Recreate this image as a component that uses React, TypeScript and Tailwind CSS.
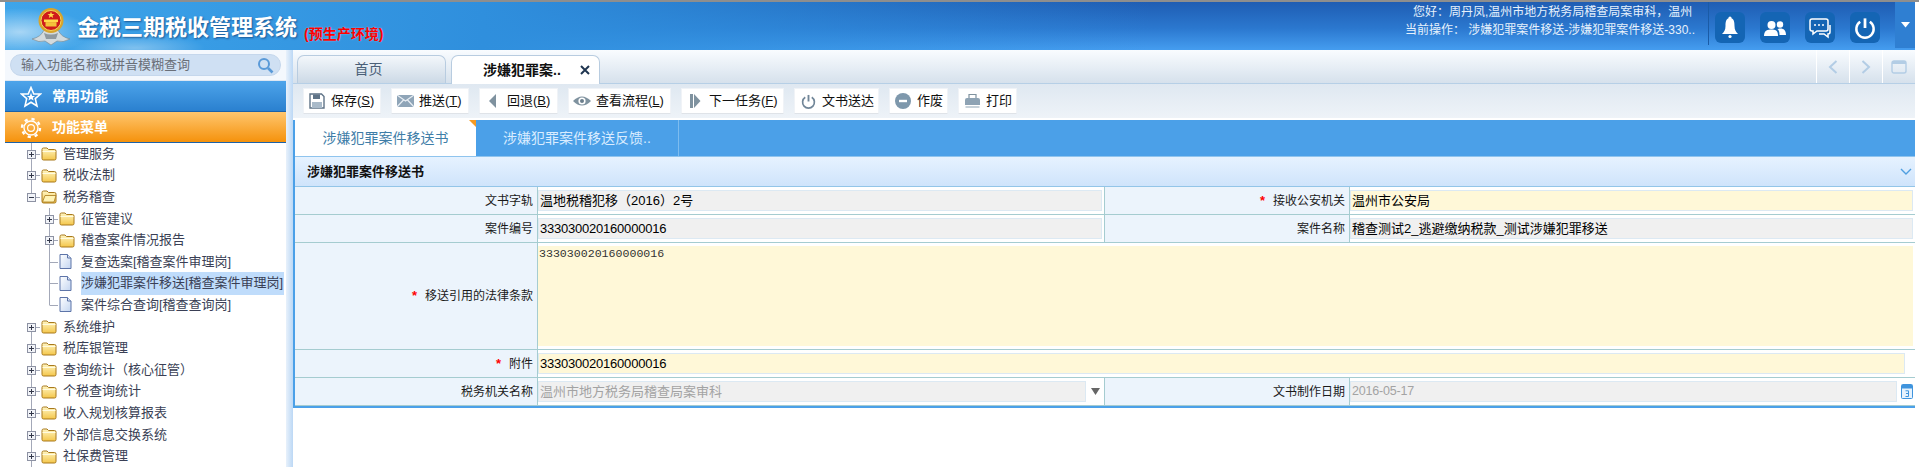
import React from "react";

const Folder = ({ open }: { open?: boolean }) => (
  <svg width="16" height="15" viewBox="0 0 16 15" className="shrink-0">
    <defs>
      <linearGradient id="fg" x1="0" y1="0" x2="0" y2="1">
        <stop offset="0" stopColor="#fff6c4" />
        <stop offset="1" stopColor="#f4c64a" />
      </linearGradient>
    </defs>
    <path d="M1 3.5 Q1 2 2.5 2 H6 L7.5 3.5 H13.5 Q15 3.5 15 5 V12.5 Q15 14 13.5 14 H2.5 Q1 14 1 12.5 Z" fill="url(#fg)" stroke="#a8791c" strokeWidth="1" />
    {open ? <path d="M1.5 13 L4 6.5 H15 L13 13 Z" fill="#fff3b5" stroke="#a8791c" strokeWidth="0.8" /> : <path d="M1.5 5.5 H14.5" stroke="#fffbe0" strokeWidth="1" />}
  </svg>
);

const Doc = () => (
  <svg width="13" height="15" viewBox="0 0 13 15" className="shrink-0">
    <defs>
      <linearGradient id="dg" x1="0" y1="0" x2="1" y2="1">
        <stop offset="0" stopColor="#ffffff" />
        <stop offset="1" stopColor="#c3d5f0" />
      </linearGradient>
    </defs>
    <path d="M1 .5 H8.5 L12 4 V14.5 H1 Z" fill="url(#dg)" stroke="#5d74a8" />
    <path d="M8.5 .5 V4 H12" fill="#dfe8f6" stroke="#5d74a8" />
  </svg>
);

type Conn = "plus" | "minus" | "tee" | "elbow";

const Connector = ({ kind, above = true, below = true }: { kind: Conn; above?: boolean; below?: boolean }) => (
  <svg width="18" height="22" viewBox="0 0 18 22" className="shrink-0">
    {above && <path d="M9.5 0 V11" stroke="#a3a8b8" />}
    {below && kind !== "elbow" && <path d="M9.5 11 V22" stroke="#a3a8b8" />}
    {(kind === "tee" || kind === "elbow") && <path d="M9.5 11.5 H18" stroke="#a3a8b8" />}
    {(kind === "plus" || kind === "minus") && (
      <g>
        <path d="M14 11.5 H18" stroke="#a3a8b8" />
        <rect x="5.5" y="7.5" width="8" height="8" fill="#f1f3f8" stroke="#8d92a3" />
        <path d="M7 11.5 H12" stroke="#33384a" />
        {kind === "plus" && <path d="M9.5 9 V14" stroke="#33384a" />}
      </g>
    )}
  </svg>
);

const Row = ({ level = 1, kind, icon, label, selected, above, below }: { level?: number; kind: Conn; icon: "folder" | "open" | "doc"; label: string; selected?: boolean; above?: boolean; below?: boolean }) => (
  <div className={`flex items-center h-[21.6px] ${level === 2 ? "pl-[35px]" : "pl-[17px]"}`}>
    <Connector kind={kind} above={above} below={below} />
    <div className="w-[23px] shrink-0 pl-[1px]">
      {icon === "doc" ? <Doc /> : <Folder open={icon === "open"} />}
    </div>
    <span className={`text-[13px] leading-[22px] whitespace-nowrap text-[#3a3f55] ${selected ? "bg-[#bfdcfb] w-[203px] h-[23px]" : ""}`}>{label}</span>
  </div>
);

const ToolBtn = ({ icon, label, u, w }: { icon: React.ReactNode; label: string; u?: string; w: string }) => (
  <div className={`${w} h-[26px] flex items-center gap-[5px] pl-[4px] bg-white border border-[#f0f3f7] border-b-[#dfe3e8] text-[13px] text-[#111] whitespace-nowrap`}>
    <span className="w-[18px] flex justify-center shrink-0">{icon}</span>
    <span>
      {label}
      {u && (
        <>
          (<span className="underline">{u}</span>)
        </>
      )}
    </span>
  </div>
);

const Label = ({ children, req }: { children: React.ReactNode; req?: boolean }) => (
  <div className="bg-[#ecf4fc] flex items-center justify-end pr-[4px] text-[12px] text-[#1a1a1a] whitespace-nowrap">
    {req && <span className="text-[#f00] font-bold mr-[8px] text-[13px]">*</span>}
    {children}
  </div>
);

const Input = ({ children, tone = "gray" }: { children?: React.ReactNode; tone?: "gray" | "yellow" }) => (
  <div className={`h-[21px] flex-1 flex items-center pl-[1px] border border-[#dce9f3] text-[13px] whitespace-nowrap ${tone === "gray" ? "bg-[#f0f0f0]" : "bg-[#fff8d8]"}`}>
    {children}
  </div>
);

const Value = ({ children, extra = "pr-[2px]" }: { children: React.ReactNode; extra?: string }) => <div className={`bg-white flex items-center ${extra}`}>{children}</div>;

const Emblem = () => (
  <svg width="38" height="38" viewBox="0 0 38 38" className="shrink-0">
    <path d="M0 31 Q9 29 12 22 L26 22 Q29 29 38 31 Q31 35 25 33 L19 37 L13 33 Q7 35 0 31 Z" fill="#d3dadd" stroke="#75858c" strokeWidth=".6" />
    <circle cx="19" cy="12.5" r="12.5" fill="#d8a42c" />
    <circle cx="19" cy="12.5" r="10" fill="#cf1b1b" stroke="#f6d65a" />
    <path d="M19 3.5 l.9 2.4 h2.6 l-2 1.6 .7 2.5 -2.2-1.5 -2.2 1.5 .7-2.5 -2-1.6 h2.6 z" fill="#ffd94a" />
    <rect x="12" y="11.5" width="14" height="2.6" fill="#ffd94a" />
    <rect x="13.5" y="14.1" width="11" height="4.4" fill="#f4c23a" />
    <path d="M12 25 Q19 28 26 25 L24 31 H14 Z" fill="#8f99a0" />
  </svg>
);

const HeadIcon = ({ children }: { children: React.ReactNode }) => <div className="w-[30px] h-[31px] rounded-[6px] bg-[#1465b4] flex items-center justify-center">{children}</div>;

const Save = () => (
  <svg width="16" height="16" viewBox="0 0 16 16"><path d="M1 1 H12.5 L15 3.5 V15 H1 Z" fill="#fff" stroke="#5f7387" strokeWidth="1.4" /><rect x="4" y="1.5" width="7" height="4.5" fill="#5f7387" /><rect x="3" y="9" width="10" height="6" fill="#a9bac9" /></svg>
);
const Mail = () => (
  <svg width="17" height="12" viewBox="0 0 17 12"><rect width="17" height="12" fill="#8fa5b8" /><path d="M0 0 L8.5 6 L17 0 M0 12 L6.5 5 M17 12 L10.5 5" stroke="#e8eef4" strokeWidth="1.2" fill="none" /></svg>
);
const Back = () => (
  <svg width="10" height="14" viewBox="0 0 10 14"><path d="M8 0 V14 L1 7 Z" fill="#7f929f" /></svg>
);
const Eye = () => (
  <svg width="18" height="12" viewBox="0 0 18 12"><path d="M0 6 Q9 -3 18 6 Q9 15 0 6 Z" fill="#7f929f" /><circle cx="9" cy="6" r="3.6" fill="#fff" /><circle cx="9" cy="6" r="2" fill="#6b7e8c" /></svg>
);
const Next = () => (
  <svg width="11" height="14" viewBox="0 0 11 14"><path d="M0 0 H3 V14 H0 Z M4 0 L10.5 7 L4 14 Z" fill="#7f929f" /></svg>
);
const Power = ({ c = "#718698", s = 15 }: { c?: string; s?: number }) => (
  <svg width={s} height={s} viewBox="0 0 16 16" fill="none"><path d="M8 1 V8" stroke={c} strokeWidth="2" /><path d="M4.5 3.5 A6.3 6.3 0 1 0 11.5 3.5" stroke={c} strokeWidth="1.8" /></svg>
);
const Abolish = () => (
  <svg width="16" height="16" viewBox="0 0 16 16"><circle cx="8" cy="8" r="8" fill="#7e98ac" /><rect x="4" y="6.8" width="8" height="2.4" fill="#fff" /></svg>
);
const Printer = () => (
  <svg width="17" height="16" viewBox="0 0 17 16"><path d="M5 5 V1.5 H12 V5" fill="none" stroke="#7f929f" strokeWidth="1.2" /><path d="M1 12 V7 Q1 5 3 5 H14 Q16 5 16 7 V12 Z" fill="#8ea3b4" /><rect x="1.5" y="13.5" width="14" height="1" fill="#8ea3b4" /></svg>
);

export default function App() {
  return (
    <div className="w-[1919px] h-[467px] overflow-hidden flex flex-col bg-white border-t-2 border-t-[#8e8e8e] font-['Liberation_Sans','Noto_Sans_CJK_SC',sans-serif]">
      <header className="h-[48px] shrink-0 flex items-stretch ml-[5px] mr-[4px] bg-[radial-gradient(ellipse_70px_24px_at_15px_30px,rgba(255,255,255,.55),transparent),radial-gradient(ellipse_70px_14px_at_130px_46px,rgba(255,255,255,.35),transparent),linear-gradient(90deg,#3ea5ea_0%,#2f8fdd_25%,rgba(40,120,210,0)_60%),linear-gradient(180deg,#1f5db3_0%,#2b78cf_55%,#459df0_100%)]">
        <div className="flex items-start pl-[27px] pt-[6px]">
          <Emblem />
          <span className="ml-[7px] mt-[3px] text-[22px] leading-[34px] font-bold text-white whitespace-nowrap [text-shadow:1px_1px_2px_rgba(0,30,80,.55)]">金税三期税收管理系统</span>
          <span className="ml-[7px] mt-[14px] text-[14px] leading-[24px] font-bold text-[#f00] whitespace-nowrap [text-shadow:0_0_2px_rgba(255,255,255,.45)]">(预生产环境)</span>
        </div>
        <div className="ml-auto flex items-stretch">
          <div className="w-[293px] pt-[1px] text-[12px] leading-[18px] text-[#e6f1fc] whitespace-nowrap">
            <div className="pl-[8px]">您好：周丹凤,温州市地方税务局稽查局案审科，温州</div>
            <div>当前操作： 涉嫌犯罪案件移送-涉嫌犯罪案件移送-330..</div>
          </div>
          <div className="w-[1px] h-[43px] bg-[#1a5ba6] ml-[10px]" />
          <div className="flex gap-[15px] pl-[6px] pt-[10px] items-start">
            <HeadIcon>
              <svg width="18" height="23" viewBox="0 0 18 23"><circle cx="9" cy="2" r="1.6" fill="#fff" /><path d="M9 2 C5 2 4.5 6 4.5 10 C4.5 14 3 16 1 18 H17 C15 16 13.5 14 13.5 10 C13.5 6 13 2 9 2 Z" fill="#fff" /><circle cx="9" cy="20.5" r="1.6" fill="#fff" /></svg>
            </HeadIcon>
            <HeadIcon>
              <svg width="22" height="16" viewBox="0 0 22 16"><circle cx="7.5" cy="5" r="4" fill="#fff" /><path d="M0 16 C0 10 4 9.5 7.5 9.5 C11 9.5 14 10 14 16 Z" fill="#fff" /><circle cx="16" cy="4.5" r="3.2" fill="#fff" /><path d="M15.5 15 C15.5 11 14.5 10 13.5 9 C18 7.5 22 9 22 15 Z" fill="#fff" /></svg>
            </HeadIcon>
            <HeadIcon>
              <svg width="22" height="22" viewBox="0 0 22 22" fill="none"><path d="M3 2 H17 Q19 2 19 4 V12 Q19 14 17 14 H8 L4 17 V14 H3 Q1 14 1 12 V4 Q1 2 3 2 Z" stroke="#fff" strokeWidth="1.5" /><circle cx="6" cy="8" r="1" fill="#fff" /><circle cx="10" cy="8" r="1" fill="#fff" /><circle cx="14" cy="8" r="1" fill="#fff" /><path d="M21 8 V15 Q21 17 19 17 V20 L15 17 H10" stroke="#fff" strokeWidth="1.5" /></svg>
            </HeadIcon>
            <HeadIcon>
              <Power c="#fff" s={22} />
            </HeadIcon>
          </div>
          <div className="w-[20px] h-[46px] ml-[15px] bg-[#2f7fd2] flex items-center justify-center">
            <svg width="9" height="6" viewBox="0 0 9 6"><path d="M0 0 H9 L4.5 5.5 Z" fill="#fff" /></svg>
          </div>
        </div>
      </header>

      <div className="flex-1 min-h-0 flex ml-[5px] mr-[4px]">
        <aside className="w-[281px] shrink-0 flex flex-col bg-white">
          <div className="h-[31px] shrink-0 flex items-center px-[5px] bg-[#f4f8fd] border-b border-b-[#dde7f2]">
            <div className="flex-1 h-[22px] rounded-full bg-[#cfe0f3] border border-[#c5d7ec] flex items-center pl-[10px] pr-[6px] text-[13px] text-[#6a6f78] whitespace-nowrap">
              <span>输入功能名称或拼音模糊查询</span>
              <svg className="ml-auto" width="17" height="17" viewBox="0 0 17 17" fill="none"><circle cx="7" cy="7" r="5" stroke="#5a9ad8" strokeWidth="2" /><path d="M11 11 L15.5 15.5" stroke="#5a9ad8" strokeWidth="2.6" /></svg>
            </div>
          </div>
          <div className="h-[31px] shrink-0 flex items-center pl-[15px] pt-[1px] gap-[10px] text-white font-bold text-[14px] bg-[linear-gradient(180deg,#4da4ea,#2a80cf)] border-b border-b-[#1c62a8]">
            <svg width="22" height="22" viewBox="0 0 22 22"><path d="M11 1.5 L13.8 8 H20.5 L15.3 12.6 L17 20 L11 16.3 L5 20 L6.7 12.6 L1.5 8 H8.2 Z" fill="none" stroke="#fff" strokeWidth="1.6" /><path d="M11 7 L12.2 10 H15 L12.8 11.8 L13.6 14.6 L11 13 L8.4 14.6 L9.2 11.8 L7 10 H9.8 Z" fill="#fff" /></svg>
            <span>常用功能</span>
          </div>
          <div className="h-[31px] shrink-0 flex items-center pl-[15px] pt-[1px] gap-[10px] text-white font-bold text-[14px] bg-[linear-gradient(180deg,#ffc66e,#f5920c)] border-b border-b-[#1c62a8]">
            <svg width="22" height="22" viewBox="0 0 22 22" fill="none"><circle cx="11" cy="11" r="7" stroke="#fff" strokeWidth="1.4" /><circle cx="11" cy="11" r="9" stroke="#fff" strokeWidth="2.4" strokeDasharray="3.2 3.9" /><circle cx="11" cy="11" r="3.4" stroke="#fff" strokeWidth="1.2" /></svg>
            <span>功能菜单</span>
          </div>
          <div className="flex-1 min-h-0 overflow-hidden">
            <Row kind="plus" icon="folder" label="管理服务" />
            <Row kind="plus" icon="folder" label="税收法制" />
            <Row kind="minus" icon="open" label="税务稽查" below={false} />
            <Row level={2} kind="plus" icon="folder" label="征管建议" />
            <Row level={2} kind="plus" icon="folder" label="稽查案件情况报告" />
            <Row level={2} kind="tee" icon="doc" label="复查选案[稽查案件审理岗]" />
            <Row level={2} kind="tee" icon="doc" label="涉嫌犯罪案件移送[稽查案件审理岗]" selected />
            <Row level={2} kind="elbow" icon="doc" label="案件综合查询[稽查查询岗]" />
            <Row kind="plus" icon="folder" label="系统维护" above={false} />
            <Row kind="plus" icon="folder" label="税库银管理" />
            <Row kind="plus" icon="folder" label="查询统计（核心征管）" />
            <Row kind="plus" icon="folder" label="个税查询统计" />
            <Row kind="plus" icon="folder" label="收入规划核算报表" />
            <Row kind="plus" icon="folder" label="外部信息交换系统" />
            <Row kind="plus" icon="folder" label="社保费管理" />
          </div>
        </aside>
        <div className="w-[7px] shrink-0 bg-[linear-gradient(90deg,#e8f1fb,#bcd8f5)]" />

        <main className="flex-1 min-w-0 flex flex-col">
          <div className="h-[34px] shrink-0 flex items-end pl-[4px] gap-[5px] bg-[linear-gradient(180deg,#f9fcff,#d6e1ec)] border-b border-b-[#b6cfe6]">
            <div className="w-[149px] h-[28px] rounded-t-[7px] border border-b-0 border-[#b8cce0] bg-[linear-gradient(180deg,#f3f7fb,#ccd9e6)] flex items-center justify-center pr-[6px] text-[14px] text-[#4a6078]">首页</div>
            <div className="w-[149px] h-[29px] -mb-[1px] rounded-t-[7px] border border-b-0 border-[#b8cce0] bg-white flex items-center pl-[31px] gap-[19px] text-[14px] font-bold text-[#111] whitespace-nowrap">
              <span>涉嫌犯罪案..</span>
              <svg width="10" height="10" viewBox="0 0 10 10"><path d="M1 1 L9 9 M9 1 L1 9" stroke="#1f3550" strokeWidth="2" /></svg>
            </div>
            <div className="ml-auto flex h-full">
              {[
                <svg key="a" width="10" height="14" viewBox="0 0 10 14" fill="none"><path d="M8.5 1 L2 7 L8.5 13" stroke="#b3cde5" strokeWidth="2" /></svg>,
                <svg key="b" width="10" height="14" viewBox="0 0 10 14" fill="none"><path d="M1.5 1 L8 7 L1.5 13" stroke="#b3cde5" strokeWidth="2" /></svg>,
                <svg key="c" width="16" height="14" viewBox="0 0 16 14" fill="none"><rect x="1" y="1" width="14" height="12" rx="2" stroke="#b3cde5" strokeWidth="1.4" /><rect x="1" y="1" width="14" height="3" fill="#b3cde5" /></svg>,
              ].map((ic, i) => (
                <div key={i} className="w-[33px] flex items-center justify-center border-l border-l-white">{ic}</div>
              ))}
            </div>
          </div>

          <div className="h-[36px] shrink-0 flex items-start pt-[4px] pl-[10px] gap-[10px] bg-[linear-gradient(180deg,#dfe8f1,#eef3f8)] border-b-2 border-b-white">
            <ToolBtn w="w-[78px]" icon={<Save />} label="保存" u="S" />
            <ToolBtn w="w-[78px]" icon={<Mail />} label="推送" u="T" />
            <ToolBtn w="w-[79px]" icon={<Back />} label="回退" u="B" />
            <ToolBtn w="w-[103px]" icon={<Eye />} label="查看流程" u="L" />
            <ToolBtn w="w-[103px]" icon={<Next />} label="下一任务" u="F" />
            <ToolBtn w="w-[85px]" icon={<Power />} label="文书送达" />
            <ToolBtn w="w-[59px]" icon={<Abolish />} label="作废" />
            <ToolBtn w="w-[59px]" icon={<Printer />} label="打印" />
          </div>

          <section className="shrink-0 border-l-2 border-l-[#4ba0e8] border-b-2 border-b-[#4ba0e8]">
            <div className="h-[37px] flex bg-[#4ba0e8] border-b border-b-[#8fc4ee] text-[14px] whitespace-nowrap">
              <div className="relative w-[181px] bg-white flex items-center justify-center text-[#3f7ea8]">
                涉嫌犯罪案件移送书
                <span className="absolute top-0 right-0 w-0 h-0 border-t-[7px] border-t-[#f59a23] border-l-[7px] border-l-transparent" />
              </div>
              <div className="w-[203px] flex items-center justify-center text-[#d9ecff] border-r border-r-[#7dbcef]">涉嫌犯罪案件移送反馈..</div>
            </div>
            <div className="h-[30px] flex items-center justify-between pl-[12px] pr-[3px] bg-[linear-gradient(180deg,#e6f2ff,#cfe4fb)] border-b border-b-[#93c5e8] text-[13px] font-bold text-[#111]">
              <span>涉嫌犯罪案件移送书</span>
              <svg width="12" height="7" viewBox="0 0 12 7" fill="none"><path d="M1 1 L6 6 L11 1" stroke="#4f9fe0" strokeWidth="1.4" /></svg>
            </div>
            <div className="grid grid-cols-[242px_566px_244px_1fr] grid-rows-[27px_27px_106px_27px_27px] gap-[1px] bg-[#a5ccd0] border-b border-b-[#a5ccd0]">
              <Label>文书字轨</Label>
              <Value><Input><span>温地税稽犯移（2016）2号</span></Input></Value>
              <Label req>接收公安机关</Label>
              <Value><Input tone="yellow"><span>温州市公安局</span></Input></Value>

              <Label>案件编号</Label>
              <Value><Input><span className="tracking-[-0.22px]">333030020160000016</span></Input></Value>
              <Label>案件名称</Label>
              <Value><Input><span>稽查测试2_逃避缴纳税款_测试涉嫌犯罪移送</span></Input></Value>

              <Label req>移送引用的法律条款</Label>
              <Value extra="col-span-3 pr-[2px]">
                <div className="flex-1 h-[100px] bg-[#fff8d8] pl-[1px] text-[11.6px] leading-[16px] font-['Liberation_Mono',monospace] text-[#333]">333030020160000016</div>
              </Value>

              <Label req>附件</Label>
              <Value extra="col-span-3 pr-[10px]">
                <Input tone="yellow"><span className="tracking-[-0.22px]">333030020160000016</span></Input>
              </Value>

              <Label>税务机关名称</Label>
              <Value extra="pr-0">
                <Input><span className="text-[#a3a3a3]">温州市地方税务局稽查局案审科</span></Input>
                <span className="w-[18px] shrink-0 flex justify-center">
                  <svg width="9" height="7" viewBox="0 0 9 7"><path d="M0 0 H9 L4.5 7 Z" fill="#666" /></svg>
                </span>
              </Value>
              <Label>文书制作日期</Label>
              <Value>
                <Input><span className="text-[#a3a3a3] text-[12.5px] tracking-[-0.2px]">2016-05-17</span></Input>
                <span className="w-[16px] shrink-0 flex justify-end">
                  <svg width="12" height="15" viewBox="0 0 12 15"><rect x=".5" y=".5" width="11" height="14" rx="1" fill="#e6f2fd" stroke="#3f94dd" /><rect x="1" y="1" width="10" height="3.5" fill="#3f94dd" /><path d="M4.5 6.8 H7.5 V12.5 H4.5 M5 9.5 H7.5" stroke="#3f94dd" fill="none" /></svg>
                </span>
              </Value>
            </div>
          </section>
        </main>
      </div>
    </div>
  );
}
